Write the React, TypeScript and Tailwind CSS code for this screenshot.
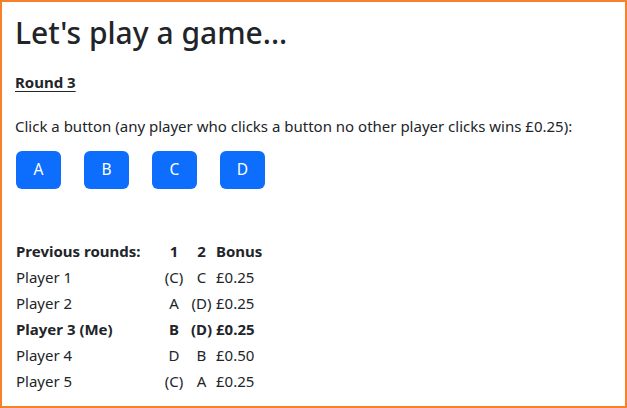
const rows = [
  { name: 'Player 1', r1: '(C)', r2: 'C', bonus: '£0.25', me: false },
  { name: 'Player 2', r1: 'A', r2: '(D)', bonus: '£0.25', me: false },
  { name: 'Player 3 (Me)', r1: 'B', r2: '(D)', bonus: '£0.25', me: true },
  { name: 'Player 4', r1: 'D', r2: 'B', bonus: '£0.50', me: false },
  { name: 'Player 5', r1: '(C)', r2: 'A', bonus: '£0.25', me: false },
]

export default function App() {
  return (
    <div
      className="h-[408px] w-[627px] overflow-hidden border-2 border-[#f7812b] bg-white pl-[13px] pt-[12px] text-[#212529]"
      style={{ fontFamily: '"Noto Sans", "Open Sans", sans-serif' }}
    >
      <h1 className="text-[30px] font-medium leading-[38px]">Let's play a game...</h1>

      <div className="mt-[18px] text-[15px] font-bold leading-6 underline underline-offset-[3px]">Round 3</div>

      <p className="mt-[20px] text-[15px] leading-6">
        Click a button (any player who clicks a button no other player clicks wins £0.25):
      </p>

      {/* Buttons */}
      <div className="mt-[13px] flex gap-[23px] pl-[1px]">
        {['A', 'B', 'C', 'D'].map((b) => (
          <button
            key={b}
            className="h-[38px] w-[45px] rounded-[6px] bg-[#0d6efd] text-[15.5px] text-white"
          >
            {b}
          </button>
        ))}
      </div>

      {/* Previous rounds */}
      <div className="mt-[49px] grid grid-cols-[144px_28px_27px_auto] pl-[1px] text-[15px] leading-[26px]">
        <div className="font-bold">Previous rounds:</div>
        <div className="text-center font-bold">1</div>
        <div className="text-center font-bold">2</div>
        <div className="pl-px font-bold">Bonus</div>
        {rows.map((r) => (
          <div key={r.name} className={`contents ${r.me ? 'font-bold' : ''}`}>
            <div>{r.name}</div>
            <div className="text-center">{r.r1}</div>
            <div className="text-center">{r.r2}</div>
            <div className="pl-px">{r.bonus}</div>
          </div>
        ))}
      </div>
    </div>
  )
}
